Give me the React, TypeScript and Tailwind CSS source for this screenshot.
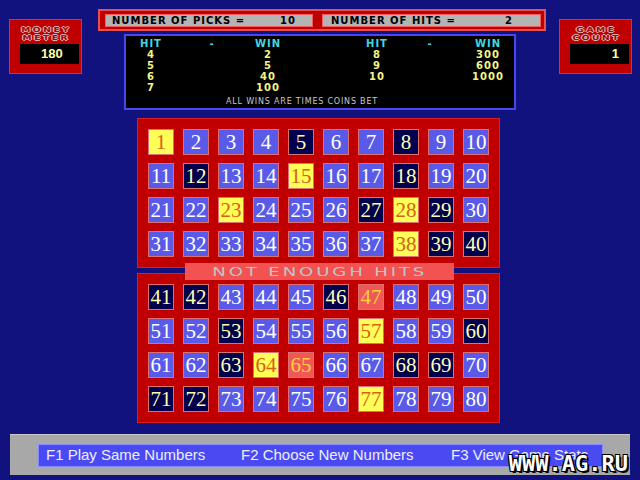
import React from 'react';

const drawn = new Set([5, 8, 12, 18, 27, 29, 39, 40, 41, 42, 46, 53, 60, 63, 68, 69, 71, 72]);
const picked = new Set([1, 15, 23, 28, 38, 57, 64, 77]);
const hits = new Set([47, 65]);

function cellColors(n: number) {
  if (hits.has(n)) return 'bg-[#f05858] text-[#ffd040]';
  if (picked.has(n)) return 'bg-[#ffff58] text-[#d86018]';
  if (drawn.has(n)) return 'bg-[#00004c] text-[#ffffb0]';
  return 'bg-[#5a5ae8] text-white';
}

function Board({ from }: { from: number }) {
  const nums = Array.from({ length: 40 }, (_, i) => from + i);
  return (
    <div className="w-[363px] h-[150px] bg-[#c00000] border border-[#d82020] p-[10px] grid grid-cols-[repeat(10,26px)] grid-rows-[repeat(4,26px)] gap-x-[9px] gap-y-[8px]">
      {nums.map((n) => (
        <div
          key={n}
          className={`w-[26px] h-[26px] border border-[#e07070] flex items-center justify-center font-['Liberation_Serif',serif] text-[21px] leading-none ${cellColors(n)}`}
        >
          {n}
        </div>
      ))}
    </div>
  );
}

const labelCls =
  "font-['DejaVu_Sans',sans-serif] font-bold text-[7px] leading-[8px] tracking-[2px] text-[#a00808] [text-shadow:1px_0_0_#d8b0b0,-1px_0_0_#d8b0b0,0_1px_0_#d8b0b0,0_-1px_0_#d8b0b0] inline-block scale-x-[1.3]";

function Meter({ top, bottom, value, valueCls }: { top: string; bottom: string; value: string; valueCls: string }) {
  return (
    <div className="w-[73px] h-[55px] bg-[#c00000] border border-[#d83030] flex flex-col">
      <div className="mt-[6px] flex flex-col items-center pl-[2px]">
        <span className={labelCls}>{top}</span>
        <span className={labelCls}>{bottom}</span>
      </div>
      <div className={`mt-[2px] ml-[10px] w-[59px] h-[20px] bg-black flex items-center font-['Liberation_Sans',sans-serif] font-bold text-[13px] text-[#ffffa0] ${valueCls}`}>
        {value}
      </div>
    </div>
  );
}

const payFont = "font-['DejaVu_Sans',sans-serif] font-bold text-[10px] leading-[11px] tracking-[1px] text-center";

function PayCol({ head, values, className }: { head: string; values: string[]; className: string }) {
  return (
    <div className={`w-[50px] flex flex-col ${className}`}>
      <div className={`${payFont} h-[11px] text-[#40d8e0]`}>{head}</div>
      {values.map((v, i) => (
        <div key={i} className={`${payFont} text-[#f4f488] h-[11px]`}>
          {v}
        </div>
      ))}
    </div>
  );
}

export default function App() {
  return (
    <div className="relative w-[640px] h-[480px] bg-[#12127e] overflow-hidden">
      {/* top section */}
      <div className="flex items-start h-[110px]">
        <div className="ml-[9px] mt-[19px]">
          <Meter top="MONEY" bottom="METER" value="180" valueCls="pl-[21px]" />
        </div>

        <div className="ml-[16px] mt-[9px] w-[448px] flex flex-col">
          <div className="h-[22px] bg-[#c00000] border-2 border-[#e85050] flex items-start pt-[3px] pl-[5px] gap-[9px]">
            <div className="w-[208px] h-[13px] bg-[#b4b4b4] border border-[#f06060] flex items-center pl-[6px] font-['DejaVu_Sans',sans-serif] font-bold text-[10px] tracking-[1px] text-black">
              <span className="w-[168px]">NUMBER OF PICKS =</span>
              <span>10</span>
            </div>
            <div className="w-[219px] h-[13px] bg-[#b4b4b4] border border-[#f06060] flex items-center pl-[8px] font-['DejaVu_Sans',sans-serif] font-bold text-[10px] tracking-[1px] text-black">
              <span className="w-[174px]">NUMBER OF HITS =</span>
              <span>2</span>
            </div>
          </div>

          <div className="ml-[26px] mt-[3px] w-[392px] h-[76px] bg-black border-2 border-[#4848f0] flex flex-col">
            <div className="flex mt-[2px]">
              <PayCol head="HIT" values={['4', '5', '6', '7']} className="ml-0" />
              <PayCol head="-" values={[]} className="ml-[11px]" />
              <PayCol head="WIN" values={['2', '5', '40', '100']} className="ml-[6px]" />
              <PayCol head="HIT" values={['8', '9', '10']} className="ml-[59px]" />
              <PayCol head="-" values={[]} className="ml-[3px]" />
              <PayCol head="WIN" values={['300', '600', '1000']} className="ml-[8px]" />
            </div>
            <div className="mt-[4px] ml-[100px] font-['DejaVu_Sans',sans-serif] text-[8px] leading-[10px] tracking-[0.8px] text-[#c8c8c8]">
              ALL WINS ARE TIMES COINS BET
            </div>
          </div>
        </div>

        <div className="ml-[13px] mt-[19px]">
          <Meter top="GAME" bottom="COUNT" value="1" valueCls="justify-end pr-[10px]" />
        </div>
      </div>

      {/* boards */}
      <div className="relative ml-[137px] mt-[8px] w-[363px] flex flex-col gap-[5px]">
        <Board from={1} />
        <Board from={41} />
        <div className="absolute top-[145px] left-[48px] w-[269px] h-[17px] bg-[#f25252] flex items-center justify-center">
          <span className="inline-block scale-x-[1.4] font-['DejaVu_Sans',sans-serif] text-[13px] leading-[17px] tracking-[2px] text-[#b8c8c8]">
            NOT ENOUGH HITS
          </span>
        </div>
      </div>

      {/* function keys */}
      <div className="ml-[10px] mt-[11px] w-[620px] h-[41px] bg-[#a8a8a8] border-t border-[#c8c8c8] pt-[9px]">
        <div className="ml-[28px] w-[565px] h-[23px] bg-[#4a4af2] border border-[#8888ff] flex items-center pl-[7px] font-['Liberation_Sans',sans-serif] text-[15px] text-[#eeeeff]">
          <span className="w-[195px]">F1 Play Same Numbers</span>
          <span className="w-[210px]">F2 Choose New Numbers</span>
          <span>F3 View Game Stats</span>
        </div>
      </div>

      {/* watermark */}
      <div className="absolute right-[12px] bottom-[5px] font-['DejaVu_Sans_Mono',monospace] font-bold text-[22px] leading-[22px] text-white [text-shadow:1px_1px_0_#000,-1px_-1px_0_#000,1px_-1px_0_#000,-1px_1px_0_#000,2px_2px_0_#000]">
        WWW.AG.RU
      </div>
    </div>
  );
}
